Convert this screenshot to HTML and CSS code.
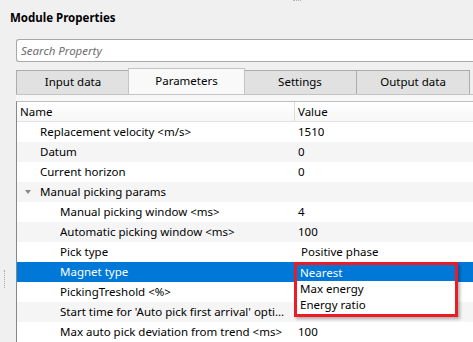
FILE: index.html
```html
<!DOCTYPE html>
<html lang="en">
<head>
  <meta charset="UTF-8" />
  <title>Module Properties</title>
  <link rel="stylesheet" href="styles.css">
</head>
<body>
  <div class="window">
    <div class="splitter-grip"></div>
    <div class="side-grip"></div>
    <h1 class="title">Module Properties</h1>

    <div class="content">
      <input type="text" class="search" placeholder="Search Property" />

      <div class="tabs">
        <div class="tab">Input data</div>
        <div class="tab active">Parameters</div>
        <div class="tab">Settings</div>
        <div class="tab">Output data</div>
      </div>

      <div class="tab-pane">
        <div class="tree">
          <div class="tree-head">
            <div class="head-cell name-col">Name</div>
            <div class="head-cell">Value</div>
          </div>

          <div class="row">
            <div class="cell name lvl1">Replacement velocity &lt;m/s&gt;</div>
            <div class="cell value">1510</div>
          </div>
          <div class="row alt">
            <div class="cell name lvl1">Datum</div>
            <div class="cell value">0</div>
          </div>
          <div class="row">
            <div class="cell name lvl1">Current horizon</div>
            <div class="cell value">0</div>
          </div>
          <div class="row alt">
            <div class="cell name lvl1"><span class="arrow"></span>Manual picking params</div>
            <div class="cell value"></div>
          </div>
          <div class="row">
            <div class="cell name lvl2">Manual picking window &lt;ms&gt;</div>
            <div class="cell value">4</div>
          </div>
          <div class="row alt">
            <div class="cell name lvl2">Automatic picking window &lt;ms&gt;</div>
            <div class="cell value">100</div>
          </div>
          <div class="row">
            <div class="cell name lvl2">Pick type</div>
            <div class="cell value combo">Positive phase</div>
          </div>
          <div class="row selected">
            <div class="cell name lvl2">Magnet type</div>
            <div class="cell value">
              <div class="dropdown">
                <div class="option current">Nearest</div>
                <div class="option">Max energy</div>
                <div class="option">Energy ratio</div>
              </div>
            </div>
          </div>
          <div class="row">
            <div class="cell name lvl2">PickingTreshold &lt;%&gt;</div>
            <div class="cell value"></div>
          </div>
          <div class="row alt">
            <div class="cell name lvl2">Start time for 'Auto pick first arrival' option &lt;ms&gt;</div>
            <div class="cell value"></div>
          </div>
          <div class="row">
            <div class="cell name lvl2">Max auto pick deviation from trend &lt;ms&gt;</div>
            <div class="cell value">100</div>
          </div>
        </div>
      </div>
    </div>
  </div>
</body>
</html>
```

FILE: styles.css
```css
* {
  box-sizing: border-box;
}

body {
  margin: 0;
  background: #f0f0f0;
  font-family: 'Noto Sans', sans-serif;
  font-size: 11.5px;
  color: #000;
  overflow: hidden;
}

.window {
  position: relative;
  height: 342px;
  overflow: hidden;
  display: flex;
  flex-direction: column;
}

.splitter-grip {
  width: 8px;
  height: 2px;
  margin-left: 293px;
  border-top: 1px dotted #b0b0b0;
}

.side-grip {
  position: absolute;
  left: 4px;
  top: 270px;
  width: 1px;
  height: 18px;
  border-left: 1px dotted #a8a8a8;
}

.title {
  margin: 6px 0 0 10px;
  font-size: 11.5px;
  font-weight: bold;
  line-height: 20px;
}

.content {
  flex: 1;
  display: flex;
  flex-direction: column;
  padding-left: 16px;
}

.search {
  display: block;
  width: 100%;
  height: 23px;
  margin-top: 11px;
  padding: 0 4px;
  border: 1px solid #a8a8a8;
  border-right: none;
  border-radius: 3px 0 0 3px;
  background: #fff;
  font-family: inherit;
  font-size: 11.5px;
  outline: none;
}

.search::placeholder {
  color: #6d6d6d;
  font-style: italic;
}

.tabs {
  display: flex;
  height: 26px;
  margin-top: 6px;
  align-items: flex-end;
}

.tab {
  width: 114px;
  height: 24px;
  line-height: 22px;
  text-align: center;
  background: #e1e1e1;
  border: 1px solid #adadad;
  border-bottom: none;
  margin-left: -1px;
}

.tab:first-child {
  margin-left: 0;
}

.tab.active {
  height: 26px;
  line-height: 24px;
  background: #f9f9f9;
  border-color: #c4c4c4;
  position: relative;
  z-index: 1;
  margin-left: -2px;
  margin-right: -1px;
  width: 117px;
}

.tab-pane {
  flex: 1;
  background: #f7f7f7;
  border-top: 1px solid #c4c4c4;
  padding-top: 6px;
  display: flex;
}

.tree {
  flex: 1;
  background: #fff;
  border-top: 1px solid #bdbdbd;
  border-left: 1px solid #828790;
}

.tree-head {
  display: grid;
  grid-template-columns: 278px 1fr;
  height: 20px;
  border-bottom: 1px solid #e3e3e3;
  background: linear-gradient(#ffffff, #f7f7f7);
}

.head-cell {
  padding-left: 3px;
  line-height: 19px;
}

.head-cell.name-col {
  border-right: 1px solid #dcdcdc;
}

.row {
  display: grid;
  grid-template-columns: 278px 1fr;
  height: 20px;
  line-height: 20px;
}

.row.alt {
  background: #f5f5f5;
}

.row.selected {
  background: #0078d7;
  color: #fff;
}

.cell {
  white-space: nowrap;
  overflow: hidden;
  text-overflow: ellipsis;
}

.cell.value {
  padding-left: 3px;
  overflow: visible;
  position: relative;
  color: #000;
}

.cell.combo {
  padding-left: 6px;
}

.lvl1 {
  padding-left: 23px;
  position: relative;
}

.lvl2 {
  padding-left: 43px;
  padding-right: 4px;
}

.arrow {
  position: absolute;
  left: 8px;
  top: 8px;
  border-left: 3px solid transparent;
  border-right: 3px solid transparent;
  border-top: 4px solid #8a8a8a;
}

.dropdown {
  position: absolute;
  left: -1px;
  top: 0;
  z-index: 2;
  width: 164px;
  height: 55px;
  border: 3px solid #ed1c24;
  background: #fff;
  box-shadow: 2px 2px 3px rgba(0, 0, 0, 0.3);
}

.option {
  height: 16px;
  line-height: 16px;
  padding-left: 3px;
  color: #000;
}

.option.current {
  background: #0078d7;
  color: #fff;
}
```
